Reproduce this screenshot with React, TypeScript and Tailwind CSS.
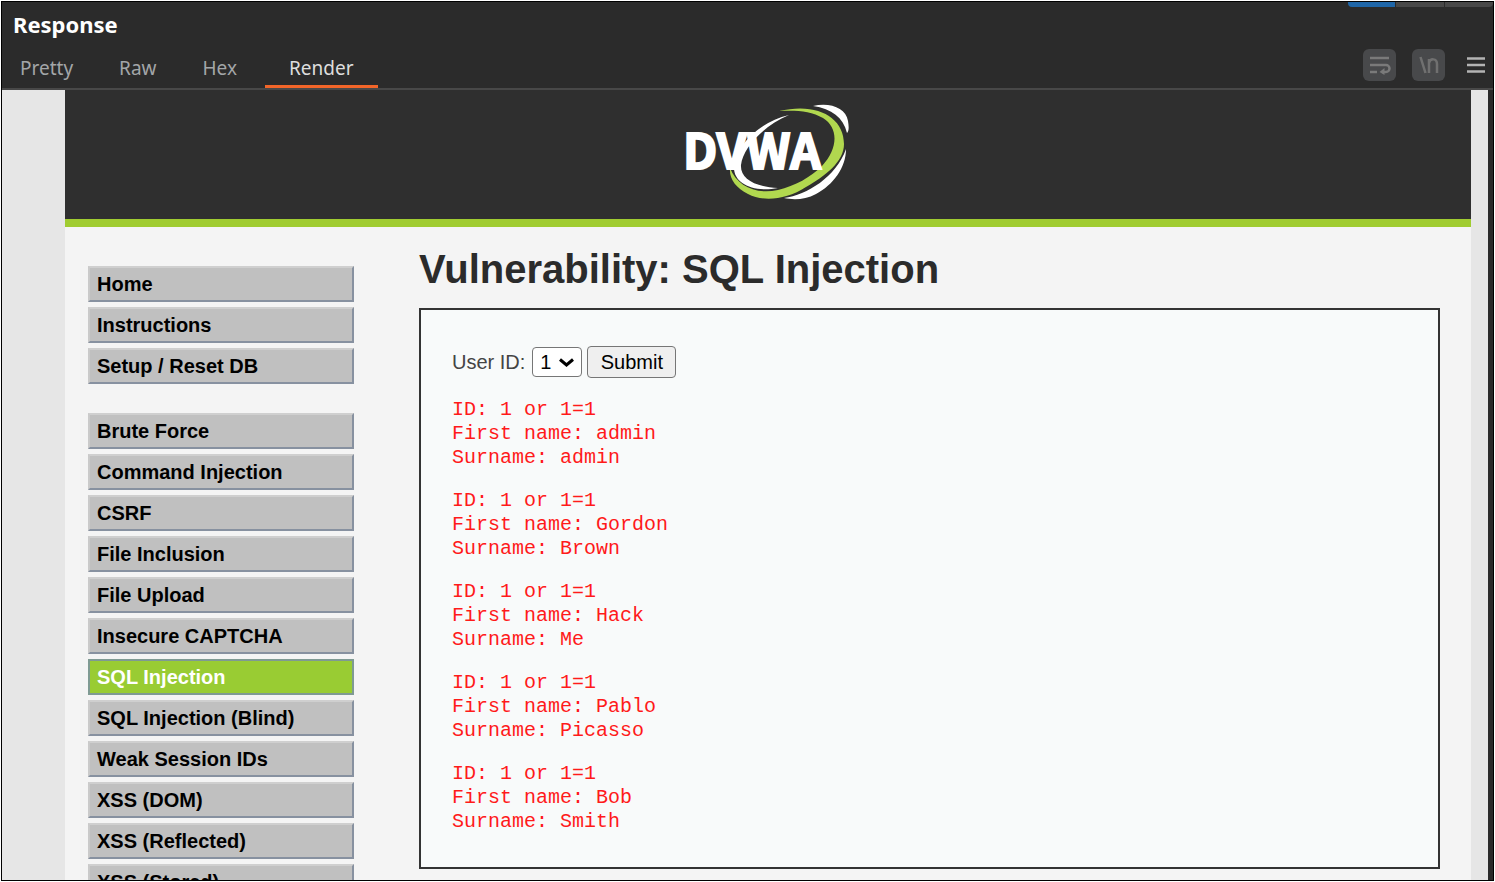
import { useState } from 'react'

const tabs = ['Pretty', 'Raw', 'Hex', 'Render']

const menuGroups = [
  ['Home', 'Instructions', 'Setup / Reset DB'],
  [
    'Brute Force',
    'Command Injection',
    'CSRF',
    'File Inclusion',
    'File Upload',
    'Insecure CAPTCHA',
    'SQL Injection',
    'SQL Injection (Blind)',
    'Weak Session IDs',
    'XSS (DOM)',
    'XSS (Reflected)',
    'XSS (Stored)',
  ],
]

const results = [
  { first: 'admin', last: 'admin' },
  { first: 'Gordon', last: 'Brown' },
  { first: 'Hack', last: 'Me' },
  { first: 'Pablo', last: 'Picasso' },
  { first: 'Bob', last: 'Smith' },
]

function DvwaLogo() {
  return (
    <svg width="170" height="100" viewBox="0 0 170 100" role="img" aria-label="DVWA">
      {/* Outer white arcs */}
      <path d="M130 3 C147 -1 163 5 165 18 C166 24 166 28 164 30 C160 14 149 6 130 3Z" fill="#fff" />
      <path d="M163 46 C163 65 150 82 133 91 C122 97 110 97 101 95 C124 92 153 74 163 46Z" fill="#fff" />
      {/* Inner white arc */}
      <path d="M106 12 C80 23 60 45 58 62 C57 75 71 84 95 85 C70 90 51 80 51 65 C51 45 75 19 106 12Z" fill="#fff" />
      {/* Green swoosh */}
      <path
        d="M96 8 C134 -1 161 14 161 41 C161 59 142 73 123 84 C103 97 80 99 65 91 C53 85 46 76 47 65 C54 83 73 92 95 87 C112 83 128 74 139 63 C155 46 156 25 140 15 C128 8 113 7 96 8Z"
        fill="#b1d84f"
      />
      <text
        x="0"
        y="66"
        fill="#fff"
        stroke="#fff"
        strokeWidth="2"
        fontSize="48"
        fontWeight="700"
        fontFamily="'Noto Sans CJK SC', sans-serif"
      >
        DVWA
      </text>
    </svg>
  )
}

function ResponseHeader() {
  const [active, setActive] = useState('Render')

  return (
    <header className="bg-[#2b2b2b] border-b-2 border-[#484848] font-['Noto_Sans',sans-serif]">
      {/* Bottom edge of the layout switcher */}
      <div className="flex justify-end gap-px h-[5px]">
        <div className="w-[47px] bg-[#1f66a8] rounded-bl" />
        <div className="w-12 bg-[#484848]" />
        <div className="w-12 bg-[#484848] rounded-br" />
      </div>
      <h2 className="pl-[11px] text-[22px] leading-[34px] font-bold text-white">Response</h2>
      <div className="flex items-center justify-between h-[47px] pr-2">
        <nav className="flex self-end">
          {tabs.map((tab) => (
            <button
              key={tab}
              onClick={() => setActive(tab)}
              className={
                tab === active
                  ? 'px-6 h-[38px] text-[19px] leading-8 text-[#dedede] border-b-3 border-[#f26529]'
                  : 'pl-[18px] pr-7 h-[38px] text-[19px] leading-8 text-[#a3a6a8] border-b-3 border-transparent'
              }
            >
              {tab}
            </button>
          ))}
        </nav>
        <div className="flex items-center gap-4">
          <button aria-label="Wrap lines" className="w-[33px] h-8 rounded-md bg-[#48494b] flex items-center justify-center">
            <svg width="22" height="20" viewBox="0 0 22 20" fill="none" stroke="#7a7a7a" strokeWidth="2.500">
              <path d="M1 3h19M1 10h16a3.500 3.500 0 0 1 0 7H13M1 17h7" />
              <path d="M15.500 13l-5 4 5 3z" fill="#7a7a7a" stroke="none" />
            </svg>
          </button>
          <button aria-label="Show non-printable characters" className="w-[33px] h-8 rounded-md bg-[#48494b] flex items-center justify-center">
            <svg width="20" height="18" viewBox="0 0 20 18" fill="none" stroke="#707070" strokeWidth="2.500">
              <path d="M1.500 1l5 16M10 17V3M10 7c1-5 8-5 8 1v9" />
            </svg>
          </button>
          <button aria-label="Menu" className="ml-1 pl-[2px]">
            <svg width="18" height="18" viewBox="0 0 18 18" stroke="#b4b4b4" strokeWidth="2.500">
              <path d="M0 2.500h18M0 9h18M0 15.500h18" />
            </svg>
          </button>
        </div>
      </div>
    </header>
  )
}

function SideMenu() {
  return (
    <nav className="w-[266px] shrink-0 pt-[39px] flex flex-col gap-[29px]">
      {menuGroups.map((group) => (
        <ul key={group[0]} className="flex flex-col gap-[5px]">
          {group.map((item) => (
            <li key={item}>
              <a
                href="#"
                className={
                  item === 'SQL Injection'
                    ? 'block h-9 pl-[7px] text-xl leading-8 font-bold text-white bg-[#99cc33] border-2 border-[#7f9a93]'
                    : 'block h-9 pl-[7px] text-xl leading-8 font-bold text-black bg-[#c0c0c0] border-2 border-t-[#cfcfcf] border-l-[#cacaca] border-r-[#8791a0] border-b-[#8791a0]'
                }
              >
                {item}
              </a>
            </li>
          ))}
        </ul>
      ))}
    </nav>
  )
}

function InjectionPanel() {
  const [userId, setUserId] = useState('1')

  return (
    <main className="flex-1 min-w-0 pt-4">
      <h1 className="text-[40px] leading-[52px] font-bold text-[#2b2b2b]">Vulnerability: SQL Injection</h1>
      <div className="mt-[13px] px-[31px] pt-9 pb-[33px] border-2 border-[#333] bg-[#f8fafa]">
        <form className="flex items-center text-xl" onSubmit={(e) => e.preventDefault()}>
          <label htmlFor="user-id" className="text-[#444]">User ID:</label>
          <div className="relative ml-[7px]">
            <select
              id="user-id"
              value={userId}
              onChange={(e) => setUserId(e.target.value)}
              className="block appearance-none w-[50px] h-[30px] pl-[7px] leading-6 bg-white text-black border border-[#767676] rounded"
            >
              {['1', '2', '3', '4', '5'].map((id) => (
                <option key={id}>{id}</option>
              ))}
            </select>
            <svg
              className="absolute right-2 top-[11px] pointer-events-none"
              width="15"
              height="9"
              viewBox="0 0 15 9"
              fill="none"
              stroke="#000"
              strokeWidth="3"
            >
              <path d="M1 1.500l6.500 5.500L14 1.500" />
            </svg>
          </div>
          <button type="submit" className="ml-[5px] w-[89px] h-8 leading-7 bg-[#efefef] text-black border border-[#767676] rounded">
            Submit
          </button>
        </form>
        <div className="mt-5 flex flex-col gap-[19px]">
          {results.map((r) => (
            <pre key={r.first} className="font-['Liberation_Mono',monospace] text-xl leading-6 text-[#ff1a1a]">
              {`ID: 1 or 1=1\nFirst name: ${r.first}\nSurname: ${r.last}`}
            </pre>
          ))}
        </div>
      </div>
    </main>
  )
}

export default function App() {
  return (
    <div className="h-screen p-px bg-white">
      <div className="h-full flex flex-col overflow-hidden border border-black bg-[#2b2b2b]">
        <ResponseHeader />
        <div className="flex-1 min-h-0 overflow-hidden mr-[5px] pl-[63px] pr-[17px] bg-[#e6e6e6]">
          <div className="min-h-full bg-[#f4f4f4] font-['Liberation_Sans',sans-serif]">
            <div className="h-[137px] pt-[13px] flex justify-center bg-[#2f2f2f] border-b-8 border-[#a0cc31]">
              <DvwaLogo />
            </div>
            <div className="flex gap-[65px] pl-[23px] pr-[31px]">
              <SideMenu />
              <InjectionPanel />
            </div>
          </div>
        </div>
      </div>
    </div>
  )
}
